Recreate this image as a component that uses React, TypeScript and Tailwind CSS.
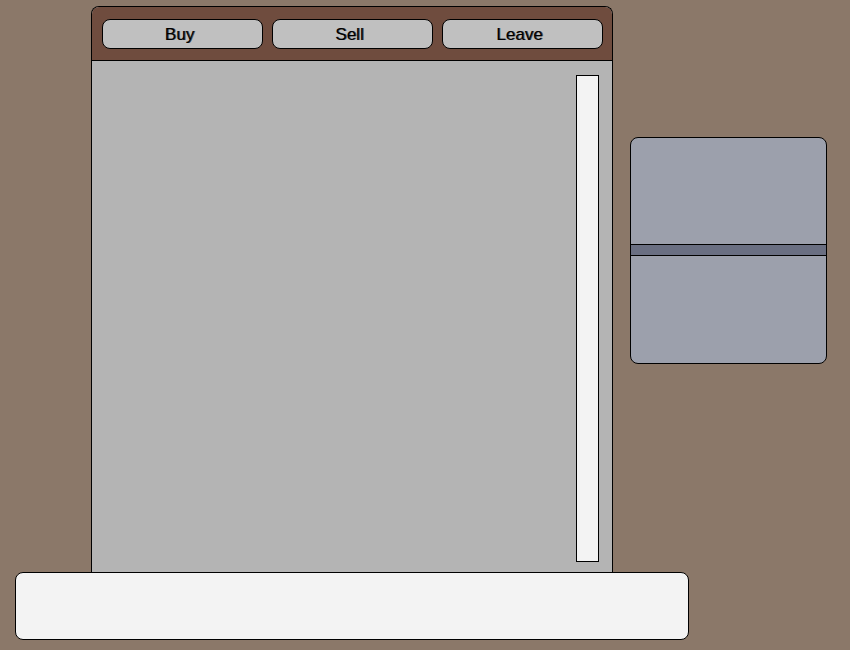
const actions = ['Buy', 'Sell', 'Leave'];

function ShopWindow() {
  return (
    <main className="flex flex-1 flex-col rounded-t-lg border border-b-0 border-black bg-[#b4b4b4]">
      <nav
        aria-label="Shop actions"
        className="grid grid-cols-3 gap-[9px] rounded-t-[7px] border-b border-black bg-[#6f4c3e] pt-3 pr-[9px] pb-[11px] pl-[10px]"
      >
        {actions.map((label) => (
          <button
            key={label}
            type="button"
            className="h-[30px] rounded-lg border border-black bg-[#c0c0c0] pt-[2px] pr-[6px] text-[17px] leading-[26px] text-black [text-shadow:1px_0_0_#00000099]"
          >
            {label}
          </button>
        ))}
      </nav>
      <div className="flex flex-1 justify-end pt-[14px] pr-[13px] pb-[10px]">
        <div className="w-[23px] border border-black bg-[#f3f3f3]" />
      </div>
    </main>
  );
}

function DetailPanel() {
  return (
    <aside className="mt-[131px] flex h-[227px] w-[197px] flex-col overflow-hidden rounded-lg border border-black bg-[#9ca0ac]">
      <div className="h-[106px]" />
      <div className="h-3 border-y border-black bg-[#6a6f82]" />
      <div className="flex-1" />
    </aside>
  );
}

export default function App() {
  return (
    <div className="flex min-h-screen flex-col bg-[#8b7869] pt-[6px] pb-[10px] font-['Liberation_Sans',Arial,sans-serif]">
      <div className="flex flex-1 gap-[17px] pr-[23px] pl-[91px]">
        <ShopWindow />
        <DetailPanel />
      </div>
      <section
        aria-label="Messages"
        className="mr-[161px] ml-[15px] h-[68px] rounded-lg border border-black bg-[#f3f3f3]"
      />
    </div>
  );
}
